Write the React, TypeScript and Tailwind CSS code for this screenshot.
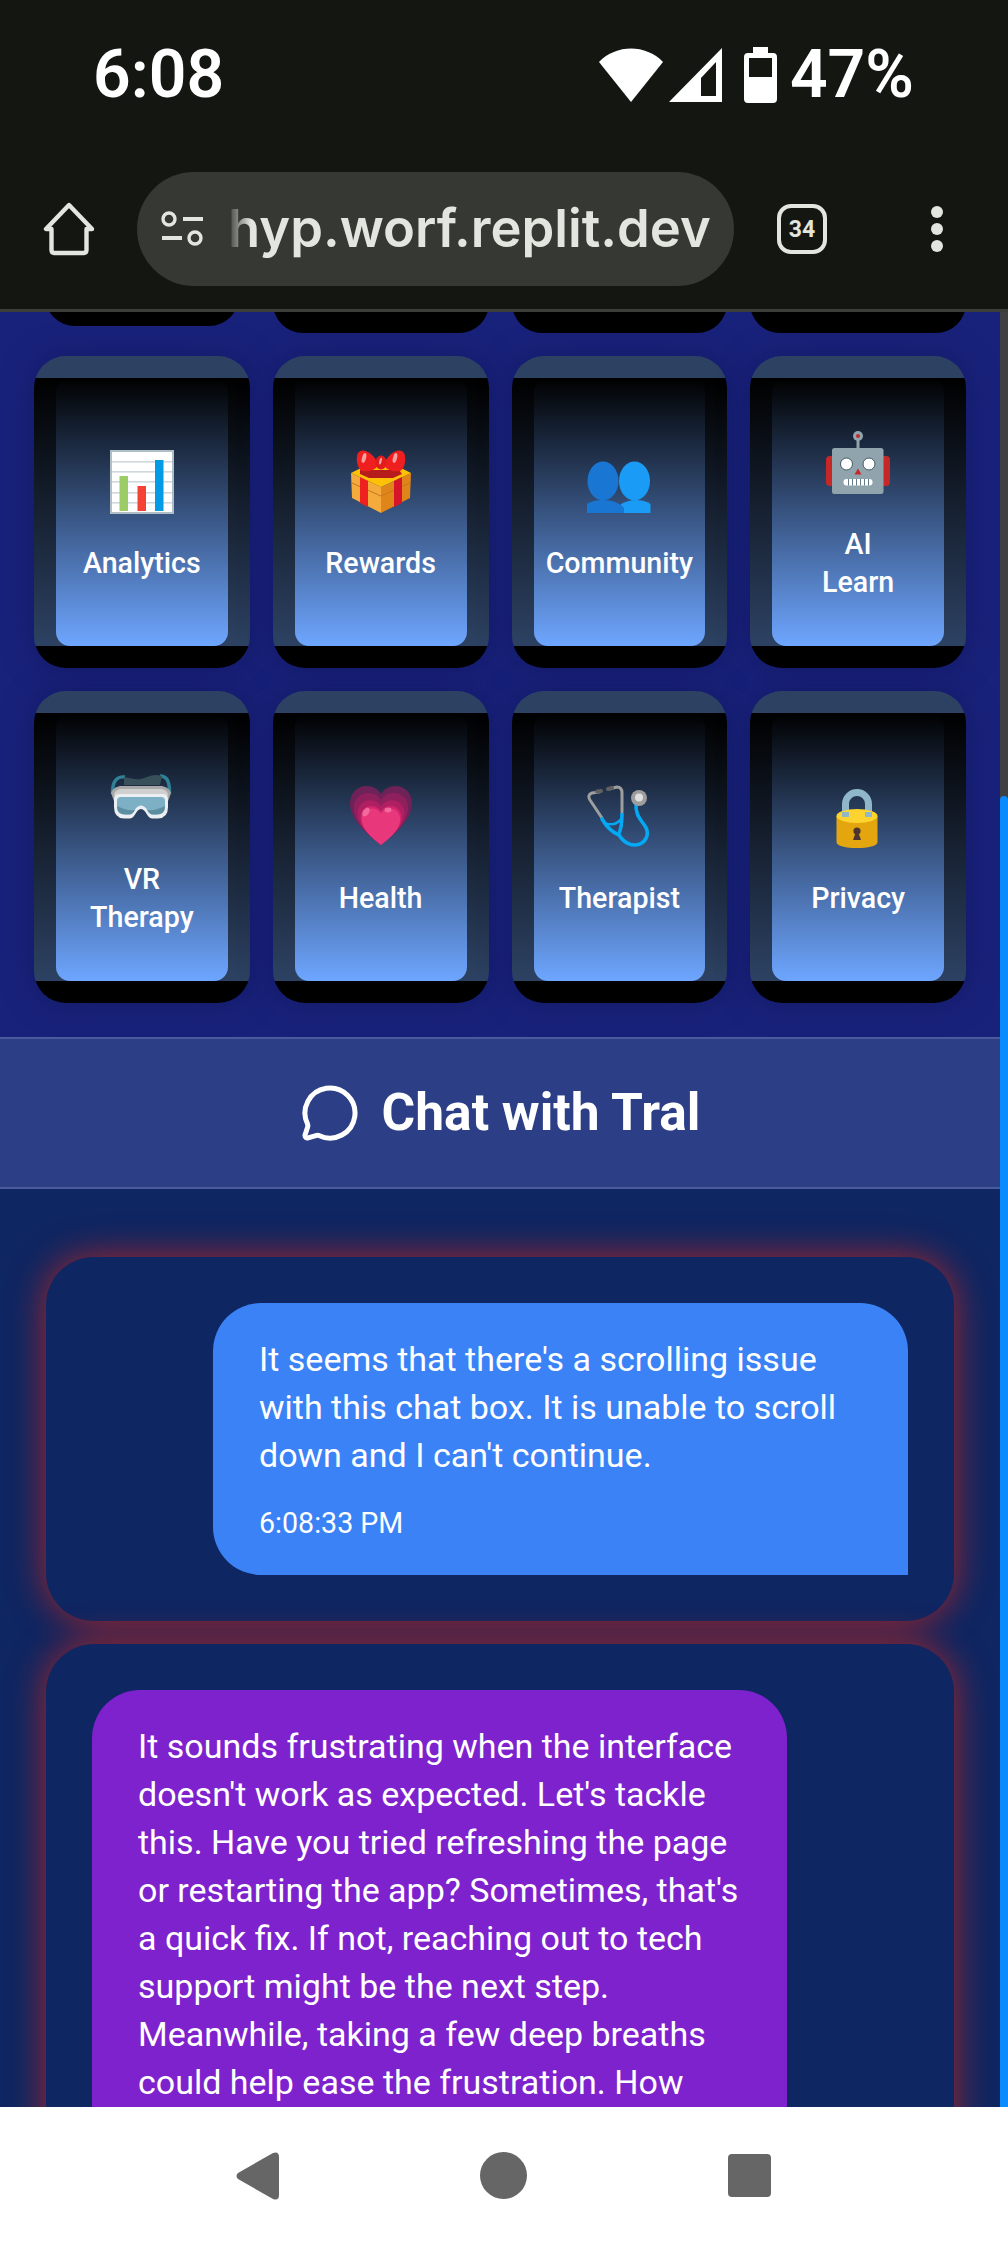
import React from "react";
import { MessageCircle } from "lucide-react";

const sz = { width: 64, height: 64, viewBox: "0 0 64 64" };

function Chart() {
  return (
    <svg {...sz}>
      <rect x="1" y="1" width="62" height="62" fill="#fff" stroke="#b0bec5" strokeWidth="2" />
      {[11, 21, 31, 42, 52].map((y) => (
        <rect key={y} x="2" y={y} width="60" height="1.6" fill="#cfd8dc" />
      ))}
      <rect x="9.5" y="26" width="8.5" height="35" fill="#9ccc65" />
      <rect x="27.5" y="36" width="8.5" height="25" fill="#f44336" />
      <rect x="45" y="10" width="8.5" height="51" fill="#039be5" />
    </svg>
  );
}
function Gift() {
  return (
    <svg {...sz}>
      <path d="M2 23 L32 37 V63 L3 48 Z" fill="#f4ab3c" />
      <path d="M62 23 L32 37 V63 L61 48 Z" fill="#e0851a" />
      <path d="M2 23 L32 8 L62 23 L32 37 Z" fill="#ffc107" />
      <path d="M3 33 L32 46 L61 33" stroke="#c9771c" strokeWidth="1" fill="none" />
      <path d="M11 27 L19 31 V57 L11 53 Z" fill="#ef2020" />
      <path d="M45 31 L53 27 V53 L45 57 Z" fill="#d8142a" />
      <path d="M11 20 H50 L53 24 L44 28 H20 L11 24 Z" fill="#b71c1c" />
      <path d="M29 14 C24 2 13 -3 9 3 C6 9 9 20 13 21 C20 22 28 20 29 14Z" fill="#f01f1f" />
      <path d="M35 14 C40 2 51 -3 55 3 C58 9 55 20 51 21 C44 22 36 20 35 14Z" fill="#f01f1f" />
      <ellipse cx="32" cy="12.5" rx="5.5" ry="7" fill="#e21c1c" />
      <ellipse cx="15" cy="8" rx="2" ry="5" fill="#f8a0a0" transform="rotate(15 15 8)" />
      <ellipse cx="46" cy="8" rx="2" ry="5" fill="#f8a0a0" transform="rotate(15 46 8)" />
      <ellipse cx="31.5" cy="11" rx="1.2" ry="3.5" fill="#f8a0a0" transform="rotate(15 31 11)" />
    </svg>
  );
}
function People() {
  return (
    <svg {...sz}>
      <ellipse cx="47.5" cy="31" rx="15.5" ry="19.5" fill="#1a9bf5" />
      <path d="M34 63 V54 Q42 50 48 50 Q58 50 63.5 54 V63 Z" fill="#1a9bf5" />
      <ellipse cx="16" cy="31" rx="15.5" ry="19.5" fill="#1976d2" />
      <path d="M0 63 V54 Q6 50 16 50 Q30 50 37 58 V63 Z" fill="#1976d2" />
    </svg>
  );
}
function Robot() {
  return (
    <svg {...sz}>
      <rect x="0" y="25" width="12" height="30" rx="4" fill="#c62828" />
      <rect x="52" y="25" width="12" height="30" rx="4" fill="#c62828" />
      <rect x="30.5" y="8" width="3" height="12" fill="#90a4ae" />
      <circle cx="32" cy="5" r="5" fill="#90a4ae" />
      <circle cx="32" cy="5" r="2" fill="#c62828" />
      <rect x="6" y="17" width="51.5" height="46" rx="2.5" fill="#90a4ae" />
      <circle cx="20.5" cy="33" r="6" fill="#fff" stroke="#455a64" strokeWidth="1" />
      <circle cx="43" cy="33" r="6" fill="#fff" stroke="#455a64" strokeWidth="1" />
      <path d="M32 37.5 L35.5 43.5 H28.5 Z" fill="#c62828" />
      <rect x="17.5" y="48" width="29" height="6.5" rx="3" fill="#fff" />
      {[22, 26, 30, 34, 38, 42].map((x) => (
        <rect key={x} x={x} y="48" width="0.9" height="6.5" fill="#546e7a" />
      ))}
    </svg>
  );
}
function Goggles() {
  return (
    <svg {...sz}>
      <path d="M2.5 28 C2 14 8 10 15 11" stroke="#2f8296" strokeWidth="3.4" fill="none" />
      <path d="M59.5 28 C60 14 56 10 50 10" stroke="#2f8296" strokeWidth="3.4" fill="none" />
      <path d="M14 11 C24 13 28 15 37 11 C42 9 47 8 52 10 L50 19 H14 Z" fill="#37505a" />
      <path d="M1 27 Q2 22 10 20 H52 Q60 22 61 27 L57 38 H5 Z" fill="#a8a8a8" />
      <path d="M4 28 Q6 23 12 23 H50 Q56 23 58 28 L56 34 H6 Z" fill="#d0d0d0" />
      <path d="M4 33 Q4 28 10 28 H52 Q58 28 58 33 V41 Q58 52 48 52.5 H42 C37 52.5 36 43 31 43 C26 43 25 52.5 20 52.5 H14 Q4 52 4 41 Z" fill="#eceff1" />
      <path d="M7 35 Q7 31 11 31 H51 Q55 31 55 35 V41 Q55 48.5 47 48.5 H42 C38 48.5 37 39.5 31 39.5 C25 39.5 24 48.5 20 48.5 H15 Q7 48.5 7 41 Z" fill="#7db0c4" />
      <path d="M7 40 Q7 48.5 15 48.5 H20 C22 48.5 24 46 25 44 Q16 45 7 40Z" fill="#4f7f92" opacity=".7" />
      <path d="M55 40 Q55 48.5 47 48.5 H42 C40 48.5 38 46 37 44 Q46 45 55 40Z" fill="#4f7f92" opacity=".7" />
    </svg>
  );
}
const heartD = "M32 60 C20 50 1 36 1 18 C1 8 9 1 17 1 C24 1 29 4 32 9 C35 4 40 1 47 1 C55 1 63 8 63 18 C63 36 44 50 32 60 Z";
function Heart() {
  return (
    <svg {...sz}>
      <path d={heartD} fill="#6f2257" />
      <g transform="translate(32 60) scale(.88) translate(-32 -60)"><path d={heartD} fill="#8e205d" /></g>
      <g transform="translate(32 60) scale(.76) translate(-32 -60)"><path d={heartD} fill="#b01f62" /></g>
      <g transform="translate(32 60) scale(.66) translate(-32 -60)"><path d={heartD} fill="#d1266c" /></g>
      <g transform="translate(32 60) scale(.62) translate(-32 -60)"><path d={heartD} fill="#e8387b" /></g>
      <ellipse cx="17" cy="27" rx="3" ry="5" fill="#f06a9e" transform="rotate(35 17 27)" />
      <ellipse cx="39" cy="25" rx="3.5" ry="2.4" fill="#f06a9e" />
    </svg>
  );
}
function Stethoscope() {
  return (
    <svg {...sz}>
      <path d="M12 7 L5 8 Q0 10 3 15 L15 33" stroke="#9e9e9e" strokeWidth="3" fill="none" strokeLinecap="round" />
      <path d="M22 4 L30 2 Q35 2 35 8 V27" stroke="#9e9e9e" strokeWidth="3" fill="none" strokeLinecap="round" />
      <path d="M10 6.5 L14 6" stroke="#616161" strokeWidth="4" strokeLinecap="round" />
      <path d="M21 4 L25 3" stroke="#616161" strokeWidth="4" strokeLinecap="round" />
      <path d="M15 34 Q22 46 32 50 C37 58 45 62 53 59 C61 55 62 47 58 41 C54 35 48 30 49 18" stroke="#03a9f4" strokeWidth="3.6" fill="none" strokeLinecap="round" />
      <path d="M35 28 C35 40 34 46 31 50" stroke="#03a9f4" strokeWidth="3.6" fill="none" />
      <path d="M18 38 Q28 42 34 34" stroke="#03a9f4" strokeWidth="2.4" fill="none" />
      <circle cx="52" cy="13" r="8" fill="#9e9e9e" />
      <circle cx="52" cy="12.5" r="4" fill="#e0e0e0" />
    </svg>
  );
}
function Lock() {
  return (
    <svg {...sz}>
      <path d="M19.5 34 V19 a11.5 11.5 0 0 1 23 0 V34" stroke="#8fb6c9" strokeWidth="7" fill="none" />
      <path d="M10.5 31 V57 C10.5 61 20 63 31 63 C42 63 51.5 61 51.5 57 V31 Z" fill="#e3a60f" />
      <ellipse cx="31" cy="31" rx="20.5" ry="7" fill="#fdd32f" />
      <path d="M19.5 32 V27 M42.5 32 V27" stroke="#8fb6c9" strokeWidth="7" />
      <path d="M27 55 L29.5 48 L32.5 48 L35 55 Z" fill="#4e342e" />
      <circle cx="31" cy="46" r="3.6" fill="#4e342e" />
    </svg>
  );
}

const items: { label: string[]; icon: React.ReactNode }[] = [
  { label: ["Analytics"], icon: <Chart /> },
  { label: ["Rewards"], icon: <Gift /> },
  { label: ["Community"], icon: <People /> },
  { label: ["AI", "Learn"], icon: <Robot /> },
  { label: ["VR", "Therapy"], icon: <Goggles /> },
  { label: ["Health"], icon: <Heart /> },
  { label: ["Therapist"], icon: <Stethoscope /> },
  { label: ["Privacy"], icon: <Lock /> },
];

function Card({ item }: { item: (typeof items)[number] }) {
  return (
    <div className="h-[312px] rounded-[32px] overflow-hidden flex flex-col shadow-[0_0_30px_rgba(15,20,90,0.55)]">
      <div className="h-[22px] bg-[#2d4263]" />
      <div className="flex-1 px-[22px] bg-[linear-gradient(#000,#2d4263)]">
        <div className="h-full rounded-[14px] bg-[linear-gradient(#000,#6ea6ff)] flex flex-col items-center justify-center pt-[8px]">
          <div className="w-[64px] h-[64px]">{item.icon}</div>
          <div className="mt-[31px] text-white text-[28.6px] leading-[37.5px] font-medium text-center">
            {item.label.map((l) => (
              <div key={l}>{l}</div>
            ))}
          </div>
        </div>
      </div>
      <div className="h-[22px] bg-black" />
    </div>
  );
}

function TopBar() {
  return (
    <div className="h-[312px] shrink-0 bg-[#141612] border-b-[3px] border-[#3c3e3a] flex flex-col">
      <div className="h-[172px] pb-[22px] pl-[93px] pr-[94px] flex items-center justify-between text-white">
        <span className="text-[66px] font-semibold font-['Roboto',sans-serif] leading-none">6:08</span>
        <div className="flex items-center">
          <svg width="66" height="56" viewBox="0 0 66 56" className="mr-[5px]">
            <path d="M1 15 C18 -3 48 -3 65 15 L33 55 Z" fill="#fff" />
          </svg>
          <svg width="54" height="55" viewBox="0 0 54 55" className="mr-[21px]">
            <path fillRule="evenodd" d="M53 0 V54 H0 Z M47 14 L32 30 V48 H47 Z" fill="#fff" />
          </svg>
          <svg width="33" height="56" viewBox="0 0 33 56" className="mr-[13px]">
            <path fillRule="evenodd" d="M9 0 H24 V6 H29 Q33 6 33 10 V52 Q33 56 29 56 H4 Q0 56 0 52 V10 Q0 6 4 6 H9 Z M5 11 V30 H28 V11 Z" fill="#fff" />
          </svg>
          <span className="text-[66px] font-semibold font-['Roboto',sans-serif] leading-none">47%</span>
        </div>
      </div>
      <div className="h-[114px] flex items-center pl-[43px] text-[#e3e5df]">
        <svg width="52" height="54" viewBox="0 0 52 54" className="shrink-0">
          <path d="M26 3 L3 27 H8.5 V48 Q8.5 51 11.5 51 H40.5 Q43.5 51 43.5 48 V27 H49 Z" fill="none" stroke="#e3e5df" strokeWidth="4.4" strokeLinejoin="round" />
        </svg>
        <div className="relative ml-[42px] w-[597px] h-[114px] rounded-full bg-[#363833] flex items-center overflow-hidden shrink-0">
          <svg width="44" height="38" viewBox="0 0 44 38" className="ml-[24px] shrink-0">
            <circle cx="8" cy="9" r="6" fill="none" stroke="#e3e5df" strokeWidth="3.4" />
            <rect x="22" y="7" width="20" height="4" fill="#e3e5df" />
            <rect x="1" y="26" width="20" height="4" fill="#e3e5df" />
            <circle cx="34" cy="28" r="6" fill="none" stroke="#e3e5df" strokeWidth="3.4" />
          </svg>
          <span className="ml-[23px] text-[52.5px] font-semibold font-['Inter',sans-serif] leading-none whitespace-nowrap pb-[2px]">hyp.worf.replit.dev</span>
          <div className="absolute left-[90px] top-0 bottom-0 w-[24px] bg-gradient-to-r from-[#363833] to-transparent" />
        </div>
        <div className="ml-[43px] w-[50px] h-[50px] rounded-[14px] border-[4px] border-[#e3e5df] flex items-center justify-center shrink-0">
          <span className="text-[23px] font-bold font-['Roboto',sans-serif] leading-none">34</span>
        </div>
        <div className="ml-[104px] flex flex-col gap-[5px] shrink-0">
          <div className="w-[12px] h-[12px] rounded-full bg-[#e3e5df]" />
          <div className="w-[12px] h-[12px] rounded-full bg-[#e3e5df]" />
          <div className="w-[12px] h-[12px] rounded-full bg-[#e3e5df]" />
        </div>
      </div>
    </div>
  );
}

function NavBar() {
  return (
    <div className="h-[137px] shrink-0 bg-white flex items-center">
      <svg width="44" height="48" viewBox="0 0 44 48" className="ml-[236px]">
        <path d="M2 21 L37 1 Q43 -1 43 5 V43 Q43 49 37 47 L2 27 Q-1 24 2 21 Z" fill="#666" />
      </svg>
      <div className="ml-[200px] w-[47px] h-[47px] rounded-full bg-[#666]" />
      <div className="ml-[201px] w-[43px] h-[43px] rounded-[4px] bg-[#666]" />
    </div>
  );
}

export default function App() {
  return (
    <div className="w-[1008px] h-[2244px] flex flex-col overflow-hidden font-['Roboto',sans-serif]">
      <TopBar />
      <div className="flex-1 flex min-h-0">
        <main className="w-[1000px] flex flex-col min-h-0 overflow-hidden bg-[#0e2662]">
          <section className="h-[725px] shrink-0 bg-[#19227a] px-[34px] overflow-hidden">
            <div className="h-[21px] overflow-hidden grid grid-cols-4 gap-[23px]">
              {[0, 1, 2, 3].map((i) => (
                <div key={i} className={i === 0 ? "px-[11px] pb-[7px] h-[21px] flex items-end" : "h-[21px] flex items-end"}>
                  <div className="w-full h-[60px] rounded-[32px] bg-black shrink-0" />
                </div>
              ))}
            </div>
            <div className="mt-[23px] grid grid-cols-4 gap-[23px]">
              {items.map((it) => (
                <Card key={it.label.join()} item={it} />
              ))}
            </div>
          </section>
          <header className="h-[152px] shrink-0 bg-[#2c3e85] border-y-2 border-[#4a5a9a] flex items-center justify-center gap-[22px] text-white">
            <MessageCircle size={60} strokeWidth={2} />
            <h1 className="text-[51.5px] font-bold leading-none">Chat with Tral</h1>
          </header>
          <div className="flex-1 min-h-0 overflow-hidden pt-[68px] px-[46px] flex flex-col gap-[23px]">
            <div className="shrink-0 rounded-[48px] p-[46px] flex justify-end bg-[#0e2662] shadow-[0_0_36px_rgba(220,38,20,0.75)]">
              <div className="w-[695px] bg-[#3b82f6] rounded-[48px] rounded-br-none pl-[46px] pr-[40px] py-[32px] text-white">
                <p className="text-[34px] leading-[48px]">It seems that there's a scrolling issue with this chat box. It is unable to scroll down and I can't continue.</p>
                <p className="mt-[24px] text-[28.6px] leading-[40px]">6:08:33 PM</p>
              </div>
            </div>
            <div className="shrink-0 rounded-[48px] p-[46px] flex justify-start bg-[#0e2662] shadow-[0_0_36px_rgba(220,38,20,0.75)]">
              <div className="w-[695px] bg-[#7e22ce] rounded-t-[48px] pl-[46px] pr-[40px] py-[32px] text-white">
                <p className="text-[34px] leading-[48px]">It sounds frustrating when the interface doesn't work as expected. Let's tackle this. Have you tried refreshing the page or restarting the app? Sometimes, that's a quick fix. If not, reaching out to tech support might be the next step. Meanwhile, taking a few deep breaths could help ease the frustration. How</p>
              </div>
            </div>
          </div>
        </main>
        <div className="w-[8px] flex flex-col bg-[#404040]">
          <div className="h-[484px] shrink-0" />
          <div className="flex-1 bg-[#0a8cff] rounded-t-[4px]" />
        </div>
      </div>
      <NavBar />
    </div>
  );
}
